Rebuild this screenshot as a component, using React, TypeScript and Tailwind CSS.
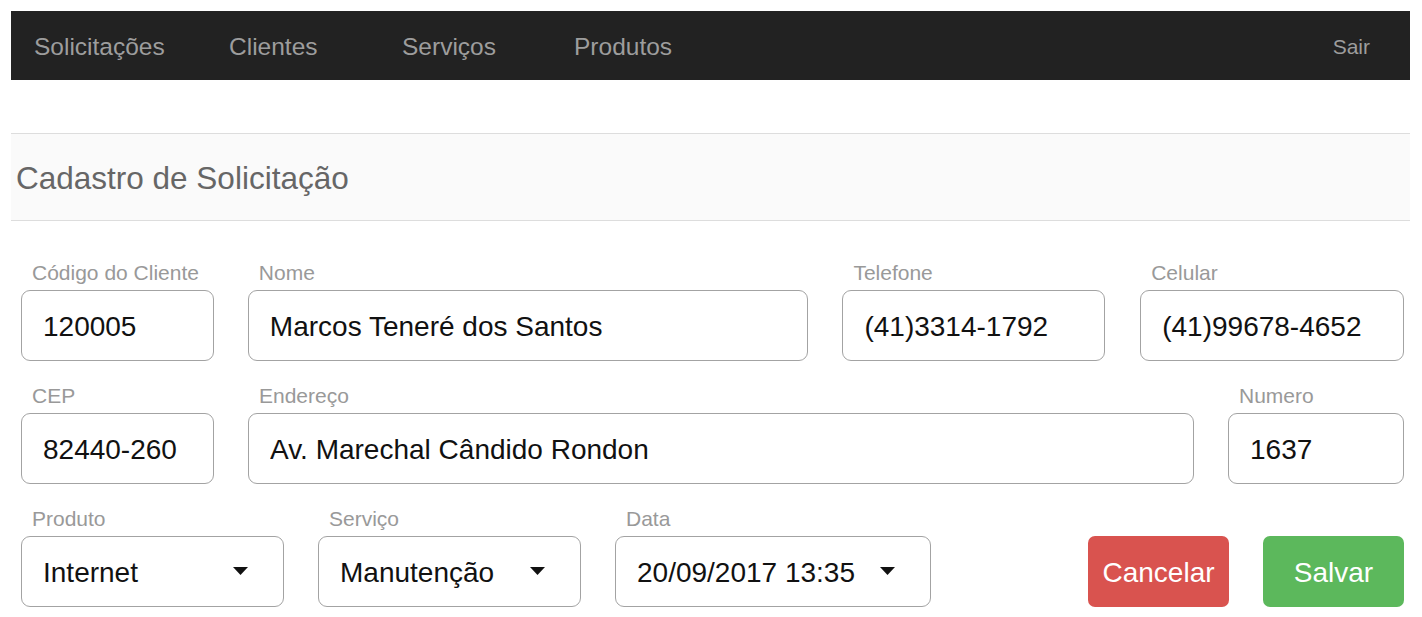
import React from "react";

const font = { fontFamily: '"Liberation Sans", Arial, sans-serif' };

function Field({ label, value, width }: { label: string; value: string; width: string }) {
  return (
    <div className={`flex flex-col ${width}`}>
      <label className="pl-[11px] text-[21px] leading-[25px] text-[#999] mb-[5px]">{label}</label>
      <input
        readOnly
        value={value}
        className="h-[71px] w-full rounded-[9px] border border-[#a3a3a3] bg-white pl-[21px] pt-[2px] text-[28px] text-[#111] outline-none"
      />
    </div>
  );
}

function SelectField({ label, value, width }: { label: string; value: string; width: string }) {
  return (
    <div className={`flex flex-col ${width}`}>
      <label className="pl-[11px] text-[21px] leading-[25px] text-[#999] mb-[5px]">{label}</label>
      <div className="flex h-[71px] w-full items-center justify-between rounded-[9px] border border-[#a3a3a3] bg-white pl-[21px] pr-[35px] pt-[2px] text-[28px] text-[#111]">
        <span>{value}</span>
        <svg width="15" height="8" viewBox="0 0 15 8" className="-mt-[3px]">
          <path d="M0 0 L15 0 L7.5 8 Z" fill="#111" />
        </svg>
      </div>
    </div>
  );
}

export default function App() {
  return (
    <div className="min-h-[617px] bg-white pt-[11px] pl-[11px] pr-[12px]" style={font}>
      {/* Navbar */}
      <nav className="flex h-[69px] items-center bg-[#222] pl-[23px] pr-[40px] pt-[3px] text-[#9d9d9d]">
        <a className="w-[195px] text-[24.5px]">Solicitações</a>
        <a className="w-[173px] text-[24.5px]">Clientes</a>
        <a className="w-[172px] text-[24.5px]">Serviços</a>
        <a className="text-[24.5px]">Produtos</a>
        <a className="ml-auto text-[21px]">Sair</a>
      </nav>

      {/* Header */}
      <div className="mt-[53px] border-y border-[#ddd] bg-[#fafafa] pl-[5px] pt-[27px] pb-[25px]">
        <h1 className="text-[31.5px] leading-[34px] text-[#666]">Cadastro de Solicitação</h1>
      </div>

      {/* Form */}
      <div className="mt-[39px] pl-[10px] pr-[6px]">
        <div className="flex gap-[34px]">
          <Field label="Código do Cliente" value="120005" width="w-[193px]" />
          <Field label="Nome" value="Marcos Teneré dos Santos" width="w-[561px]" />
          <Field label="Telefone" value="(41)3314-1792" width="w-[263px]" />
          <Field label="Celular" value="(41)99678-4652" width="w-[264px] ml-px" />
        </div>

        <div className="mt-[22px] flex gap-[34px]">
          <Field label="CEP" value="82440-260" width="w-[193px]" />
          <Field label="Endereço" value="Av. Marechal Cândido Rondon" width="w-[946px]" />
          <Field label="Numero" value="1637" width="w-[176px]" />
        </div>

        <div className="mt-[22px] flex items-end justify-between">
          <div className="flex gap-[34px]">
            <SelectField label="Produto" value="Internet" width="w-[263px]" />
            <SelectField label="Serviço" value="Manutenção" width="w-[263px]" />
            <SelectField label="Data" value="20/09/2017 13:35" width="w-[316px]" />
          </div>
          <div className="flex gap-[34px]">
            <button className="h-[71px] w-[141px] rounded-[7px] bg-[#d9534f] pt-[2px] text-[28px] text-white">Cancelar</button>
            <button className="h-[71px] w-[141px] rounded-[7px] bg-[#5cb85c] pt-[2px] text-[28px] text-white">Salvar</button>
          </div>
        </div>
      </div>
    </div>
  );
}
